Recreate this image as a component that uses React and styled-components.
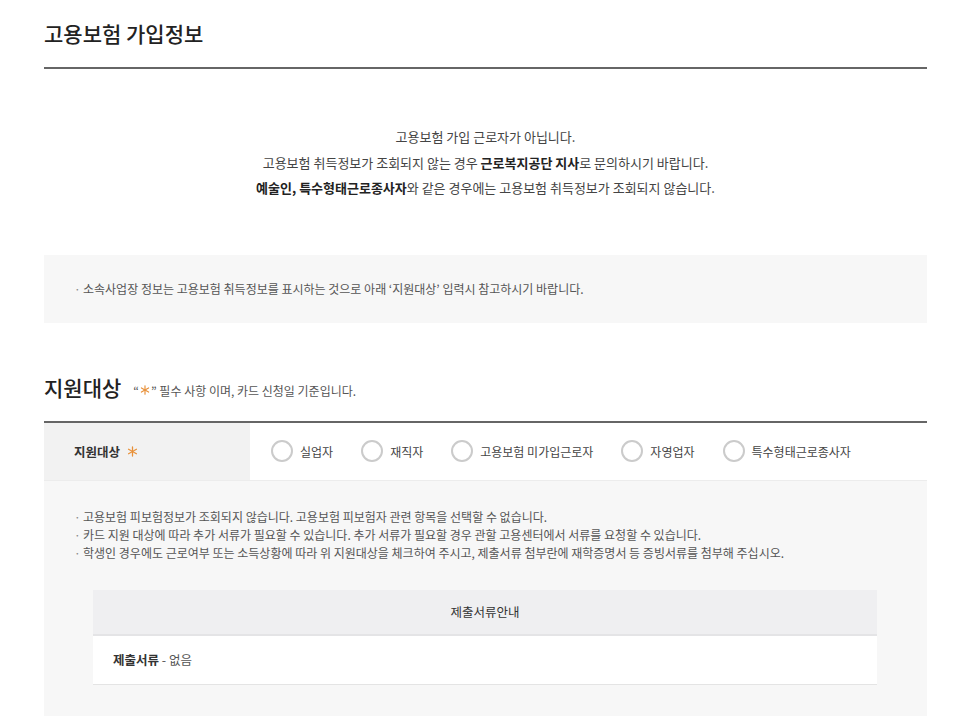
import React from 'react'
import styled, { createGlobalStyle } from 'styled-components'

const GlobalStyle = createGlobalStyle`
  body {
    margin: 0;
    background: #fff;
    font-family: "Noto Sans CJK KR", "Noto Sans", sans-serif;
    color: #333;
  }
`

const Page = styled.div`
  padding: 0 31px 0 44px;
`

const TitleBar = styled.div`
  height: 48px;
  padding-top: 19px;
  border-bottom: 2px solid #666;
  box-sizing: content-box;
`

const PageTitle = styled.h2`
  margin: 0;
  font-size: 21px;
  line-height: 28px;
  font-weight: 500;
  color: #222;
`

const Message = styled.div`
  margin-top: 55px;
  text-align: center;
  font-size: 13px;
  line-height: 25.5px;
  color: #444;

  b {
    font-weight: 700;
    color: #222;
  }
`

const NoticeBox = styled.div`
  margin-top: 54px;
  background: #f7f7f7;
  padding: 25px 30px 25px 30px;
`

const BulletList = styled.ul`
  margin: 0;
  padding: 0;
  list-style: none;
`

const Bullet = styled.li`
  position: relative;
  padding-left: 9px;
  font-size: 12px;
  line-height: 18px;
  color: #555;

  &::before {
    content: '·';
    position: absolute;
    left: 0;
    top: 0;
    color: #888;
  }
`

const SectionHead = styled.div`
  display: flex;
  align-items: baseline;
  margin-top: 50px;
  margin-bottom: 20px;
`

const SectionTitle = styled.h3`
  margin: 0;
  font-size: 21px;
  line-height: 28px;
  font-weight: 500;
  color: #222;
`

const SectionNote = styled.span`
  display: inline-flex;
  align-items: center;
  margin-left: 12px;
  font-size: 12px;
  color: #555;
`

const StarMark = styled.svg`
  width: ${(p) => p.$size}px;
  height: ${(p) => p.$size}px;
  margin: ${(p) => (p.$inline ? '0 1px' : '0 0 0 7px')};
  flex: none;
`

const Star = ({ size = 11, inline }) => (
  <StarMark $size={size} $inline={inline} viewBox="0 0 12 12">
    <g stroke="#e8913a" strokeWidth="1.4" strokeLinecap="round">
      <line x1="6" y1="1" x2="6" y2="11" />
      <line x1="1.7" y1="3.5" x2="10.3" y2="8.5" />
      <line x1="1.7" y1="8.5" x2="10.3" y2="3.5" />
    </g>
  </StarMark>
)

const Table = styled.div`
  border-top: 2px solid #666;
`

const Row = styled.div`
  display: flex;
  height: 57px;
  border-bottom: 1px solid #ececec;
`

const LabelCell = styled.div`
  display: flex;
  align-items: center;
  width: 176px;
  padding-left: 30px;
  background: #f2f2f2;
  font-size: 12.5px;
  font-weight: 700;
  color: #333;
`

const RadioGroup = styled.div`
  display: flex;
  align-items: center;
  padding-left: 21px;
  gap: 28px;
`

const RadioItem = styled.label`
  display: flex;
  align-items: center;
  gap: 7px;
  font-size: 12px;
  color: #444;
`

const Circle = styled.span`
  width: 22px;
  height: 22px;
  box-sizing: border-box;
  border: 2px solid #cbcbcb;
  border-radius: 50%;
  background: #fff;
`

const InfoArea = styled.div`
  background: #f7f7f7;
  padding: 27px 50px 31px 30px;
`

const DocTable = styled.div`
  margin: 28px 0 0 19px;
`

const DocHead = styled.div`
  height: 44px;
  display: flex;
  align-items: center;
  justify-content: center;
  background: #efeff1;
  border-bottom: 2px solid #e4e4e6;
  font-size: 12.5px;
  color: #333;
`

const DocBody = styled.div`
  height: 48px;
  display: flex;
  align-items: center;
  padding-left: 20px;
  background: #fff;
  border-bottom: 1px solid #e4e4e4;
  font-size: 12.5px;
  color: #555;

  b {
    font-weight: 700;
    color: #333;
  }
`

const targets = ['실업자', '재직자', '고용보험 미가입근로자', '자영업자', '특수형태근로종사자']

export default function App() {
  return (
    <>
      <GlobalStyle />
      <Page>
        <TitleBar>
          <PageTitle>고용보험 가입정보</PageTitle>
        </TitleBar>

        <Message>
          <div>고용보험 가입 근로자가 아닙니다.</div>
          <div>
            고용보험 취득정보가 조회되지 않는 경우 <b>근로복지공단 지사</b>로 문의하시기 바랍니다.
          </div>
          <div>
            <b>예술인, 특수형태근로종사자</b>와 같은 경우에는 고용보험 취득정보가 조회되지 않습니다.
          </div>
        </Message>

        <NoticeBox>
          <BulletList>
            <Bullet>소속사업장 정보는 고용보험 취득정보를 표시하는 것으로 아래 ‘지원대상’ 입력시 참고하시기 바랍니다.</Bullet>
          </BulletList>
        </NoticeBox>

        <SectionHead>
          <SectionTitle>지원대상</SectionTitle>
          <SectionNote>
            “<Star size={10} inline />” 필수 사항 이며, 카드 신청일 기준입니다.
          </SectionNote>
        </SectionHead>

        <Table>
          <Row>
            <LabelCell>
              지원대상
              <Star size={11} />
            </LabelCell>
            <RadioGroup>
              {targets.map((t) => (
                <RadioItem key={t}>
                  <Circle />
                  {t}
                </RadioItem>
              ))}
            </RadioGroup>
          </Row>
          <InfoArea>
            <BulletList>
              <Bullet>고용보험 피보험정보가 조회되지 않습니다. 고용보험 피보험자 관련 항목을 선택할 수 없습니다.</Bullet>
              <Bullet>카드 지원 대상에 따라 추가 서류가 필요할 수 있습니다. 추가 서류가 필요할 경우 관할 고용센터에서 서류를 요청할 수 있습니다.</Bullet>
              <Bullet>학생인 경우에도 근로여부 또는 소득상황에 따라 위 지원대상을 체크하여 주시고, 제출서류 첨부란에 재학증명서 등 증빙서류를 첨부해 주십시오.</Bullet>
            </BulletList>
            <DocTable>
              <DocHead>제출서류안내</DocHead>
              <DocBody>
                <b>제출서류</b>&nbsp;- 없음
              </DocBody>
            </DocTable>
          </InfoArea>
        </Table>
      </Page>
    </>
  )
}
